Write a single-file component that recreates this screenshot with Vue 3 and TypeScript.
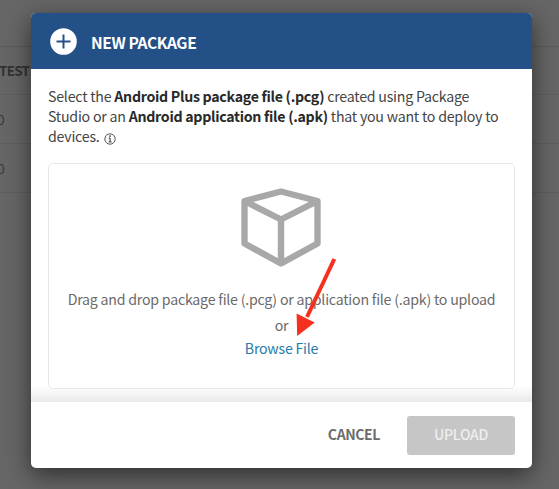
<script setup lang="ts">
const rows: string[] = ['0', '0']
</script>

<template>
  <div class="screen">
    <div class="page">
      <div class="toolbar"></div>
      <div class="table-head">TEST</div>
      <div v-for="(value, i) in rows" :key="i" class="row">{{ value }}</div>
    </div>
    <section class="dialog" role="dialog" aria-labelledby="title">
      <header class="header">
        <svg class="plus" viewBox="0 0 27 27">
          <circle cx="13.5" cy="13.5" r="13.3" fill="#fff" />
          <path d="M13.5 6.5v14M6.5 13.5h14" stroke="#235087" stroke-width="2" />
        </svg>
        <h1 id="title">NEW PACKAGE</h1>
      </header>
      <div class="body">
        <p class="intro">
          Select the <b>Android Plus package file (.pcg)</b> created using Package<br />
          Studio or an <b>Android application file (.apk)</b> that you want to deploy to<br />
          devices.
          <svg class="info" viewBox="0 0 12 12">
            <circle cx="6" cy="6" r="5.2" fill="none" stroke="#444" stroke-width="0.9" />
            <path d="M4.8 5H6.1V8.8M4.6 8.9H7.6" fill="none" stroke="#333" stroke-width="1" />
            <circle cx="6" cy="3.1" r="0.85" fill="#333" />
          </svg>
        </p>
        <div class="dropzone">
          <svg class="cube" viewBox="0 0 80 80">
            <path
              d="M40 4.5L76.5 14V56.5L40 76.5L3.5 56.5V14ZM3.5 14L40 32.5L76.5 14M40 32.5V76.5"
              fill="none"
              stroke="#a8a8a8"
              stroke-width="6.4"
              stroke-linejoin="round"
            />
          </svg>
          <span class="hint">Drag and drop package file (.pcg) or application file (.apk) to upload</span>
          <span class="or">or</span>
          <a class="browse">Browse File</a>
        </div>
      </div>
      <footer class="footer">
        <button class="cancel">CANCEL</button>
        <button class="upload">UPLOAD</button>
      </footer>
    </section>
    <svg class="arrow" viewBox="0 0 42 80">
      <path d="M38.3 2L11 60" stroke="#f5301f" stroke-width="4" />
      <path d="M1.2 79L.6 56.5L18.7 65.5Z" fill="#f5301f" />
    </svg>
  </div>
</template>

<style>
body {
  overflow: hidden;
}
</style>

<style scoped>
.screen {
  position: relative;
  box-sizing: border-box;
  width: 559px;
  height: 489px;
  padding: 13px 0 0 31px;
  overflow: hidden;
  background: #666;
  font-family: "Noto Sans CJK SC", "Noto Sans", sans-serif;
  color: #444;
}
.page {
  position: absolute;
  inset: 0;
}
.toolbar {
  height: 46px;
  border-bottom: 1px solid #5b5b5b;
}
.table-head {
  height: 47px;
  border-bottom: 1px solid #5e5e5e;
  font-size: 13.5px;
  font-weight: 700;
  line-height: 47px;
  letter-spacing: -0.8px;
  text-indent: -1px;
  color: #333;
}
.row {
  height: 48px;
  border-bottom: 1px solid #5e5e5e;
  font-size: 14px;
  line-height: 48px;
  text-indent: -3px;
  color: #3b3b3b;
}
.dialog {
  position: relative;
  width: 501px;
  height: 455px;
  display: flex;
  flex-direction: column;
  border-radius: 5px;
  overflow: hidden;
  background: #fff;
  box-shadow: 0 7px 24px rgba(0, 0, 0, 0.55);
}
.header {
  box-sizing: border-box;
  height: 56px;
  display: flex;
  align-items: center;
  gap: 15px;
  padding-left: 19px;
  background: #235087;
  color: #fff;
}
.plus {
  width: 27px;
  height: 27px;
}
h1 {
  margin: 1px 0 0 -1px;
  font-size: 15.6px;
  font-weight: 700;
  line-height: 24px;
  letter-spacing: -0.4px;
  white-space: nowrap;
}
.body {
  box-sizing: border-box;
  height: 333px;
  padding: 17px 17px 0;
  background: linear-gradient(transparent 317px, #e9e9e9 333px);
}
.intro {
  margin: 0;
  height: 77px;
  font-size: 14.2px;
  line-height: 20px;
  letter-spacing: -0.23px;
  white-space: nowrap;
}
.intro b {
  font-weight: 700;
  letter-spacing: -0.29px;
  color: #292929;
}
.info {
  width: 12px;
  height: 12px;
  margin-left: 2px;
  vertical-align: -3px;
}
.dropzone {
  box-sizing: border-box;
  width: 467px;
  height: 226px;
  display: flex;
  flex-direction: column;
  align-items: center;
  border: 1px solid #e8e8e8;
  border-radius: 5px;
  background: #fff;
  font-size: 14.2px;
  line-height: 24px;
  letter-spacing: -0.23px;
  color: #6a6a6a;
  white-space: nowrap;
}
.cube {
  width: 80px;
  height: 80px;
  margin: 23px 2px 20px 0;
}
.or {
  margin-top: 2px;
}
.browse {
  margin-top: -1px;
  color: #267ba8;
}
.footer {
  height: 66px;
  display: flex;
  align-items: center;
  justify-content: flex-end;
  gap: 27px;
  padding-right: 17px;
}
button {
  border: 0;
  padding: 0 0 2px;
  font: 700 14px/24px "Noto Sans CJK SC", "Noto Sans", sans-serif;
  letter-spacing: -0.4px;
  background: transparent;
  color: #6c6c6c;
}
.upload {
  width: 108px;
  height: 39px;
  border-radius: 3px;
  background: #c6c6c6;
  color: #eee;
  font-weight: 500;
  letter-spacing: -0.25px;
}
.arrow {
  position: absolute;
  left: 296px;
  top: 257px;
  width: 42px;
  height: 80px;
}
</style>
